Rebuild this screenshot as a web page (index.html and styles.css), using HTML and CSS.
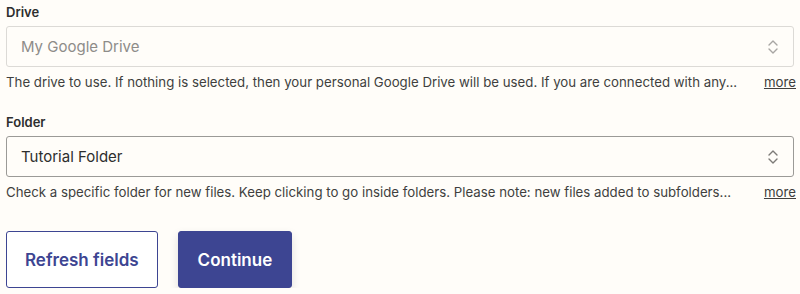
FILE: index.html
```html
<!DOCTYPE html>
<html lang="en">
<head>
    <meta charset="UTF-8">
    <title>Google Drive trigger</title>
    <link rel="stylesheet" href="styles.css">
</head>
<body>
    <div class="field">
        <label class="field-label">Drive</label>
        <div class="select disabled">
            <span class="select-value">My Google Drive</span>
            <svg class="chevrons" width="12" height="16" viewBox="0 0 12 16"><path d="M2 6 L6 2 L10 6 M2 10 L6 14 L10 10" fill="none" stroke="currentColor" stroke-width="1.4" stroke-linecap="round" stroke-linejoin="round"/></svg>
        </div>
        <div class="help">
            <span class="help-text">The drive to use. If nothing is selected, then your personal Google Drive will be used. If you are connected with any...</span>
            <a class="more" href="#">more</a>
        </div>
    </div>

    <div class="field">
        <label class="field-label">Folder</label>
        <div class="select">
            <span class="select-value">Tutorial Folder</span>
            <svg class="chevrons" width="12" height="16" viewBox="0 0 12 16"><path d="M2 6 L6 2 L10 6 M2 10 L6 14 L10 10" fill="none" stroke="currentColor" stroke-width="1.4" stroke-linecap="round" stroke-linejoin="round"/></svg>
        </div>
        <div class="help">
            <span class="help-text">Check a specific folder for new files. Keep clicking to go inside folders. Please note: new files added to subfolders...</span>
            <a class="more" href="#">more</a>
        </div>
    </div>

    <div class="actions">
        <button class="btn btn-outline">Refresh fields</button>
        <button class="btn btn-primary">Continue</button>
    </div>
</body>
</html>
```

FILE: styles.css
```css
body {
    margin: 0;
    padding: 0 6px;
    background: #fffdf9;
    font-family: Inter, "Noto Sans", sans-serif;
    color: #2d2e2e;
}
.field { margin-bottom: 16px; }
.field-label {
    display: block;
    font-size: 13px;
    font-weight: 600;
    line-height: 20px;
    margin: 2px 0 4px;
}
.select {
    height: 39px;
    border: 1px solid #9b9a97;
    border-radius: 3px;
    display: flex;
    align-items: center;
    justify-content: space-between;
    padding: 0 14px 0 14px;
    color: #2d2e2e;
}
.select.disabled {
    border-color: #dcdad6;
    color: #8e8c89;
}
.select-value { font-size: 15px; }
.chevrons { color: #7d7b78; }
.select.disabled .chevrons { color: #a8a6a3; }
.help {
    display: flex;
    justify-content: space-between;
    gap: 20px;
    margin-top: 1px;
    font-size: 13.25px;
    line-height: 28px;
    color: #403f3e;
}
.help-text {
    white-space: nowrap;
    overflow: hidden;
}
.more {
    color: #403f3e;
    text-decoration: underline;
    margin-right: -2px;
}
.actions {
    display: flex;
    gap: 20px;
    margin-top: 25px;
}
.btn {
    font-family: Inter, "Noto Sans", sans-serif;
    font-size: 17px;
    font-weight: 600;
    height: 57px;
    padding: 0 18px;
    border-radius: 3px;
    cursor: pointer;
}
.btn-outline {
    background: #ffffff;
    color: #3d4592;
    border: 1px solid #3d4592;
}
.btn-primary {
    padding: 0 19px;
    background: #3d4592;
    color: #ffffff;
    border: 1px solid #3d4592;
    box-shadow: 0 4px 10px rgba(0, 0, 0, 0.12);
}
```
